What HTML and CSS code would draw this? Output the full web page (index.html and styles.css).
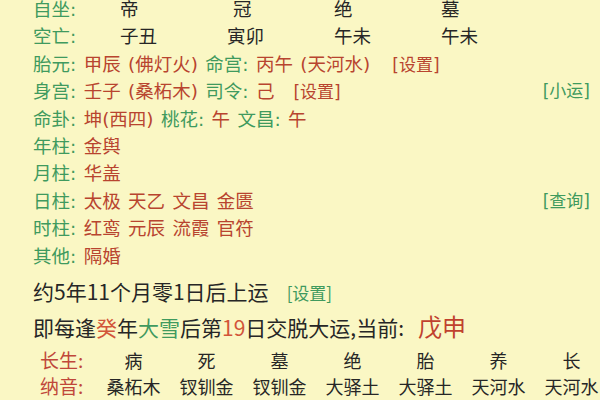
FILE: index.html
```html
<!DOCTYPE html>
<html lang="zh-CN">
<head>
<meta charset="utf-8">
<title>排盘</title>
<link rel="stylesheet" href="styles.css">
</head>
<body>
<div class="page">
  <div class="row cols">
    <span class="g">自坐:</span><span>帝</span><span class="shift">冠</span><span>绝</span><span>墓</span>
  </div>
  <div class="row cols">
    <span class="g">空亡:</span><span>子丑</span><span>寅卯</span><span>午未</span><span>午未</span>
  </div>
  <div class="row">
    <span class="g">胎元:</span> <span class="r">甲辰 (佛灯火)</span> <span class="g">命宫:</span> <span class="r">丙午 (天河水)</span><span class="link r gap">[设置]</span>
  </div>
  <div class="row split">
    <div><span class="g">身宫:</span> <span class="r">壬子 (桑柘木)</span> <span class="g">司令:</span> <span class="r">己</span><span class="link r gap2">[设置]</span></div>
    <span class="link g">[小运]</span>
  </div>
  <div class="row">
    <span class="g">命卦:</span> <span class="r">坤(西四)</span> <span class="g">桃花:</span> <span class="r">午</span> <span class="g">文昌:</span> <span class="r">午</span>
  </div>
  <div class="row"><span class="g">年柱:</span> <span class="r">金舆</span></div>
  <div class="row"><span class="g">月柱:</span> <span class="r">华盖</span></div>
  <div class="row split">
    <div><span class="g">日柱:</span> <span class="r">太极 天乙 文昌 金匮</span></div>
    <span class="link g">[查询]</span>
  </div>
  <div class="row"><span class="g">时柱:</span> <span class="r">红鸾 元辰 流霞 官符</span></div>
  <div class="row"><span class="g">其他:</span> <span class="r">隔婚</span></div>

  <div class="big first">约5年11个月零1日后上运<span class="link g set">[设置]</span></div>
  <div class="big">即每逢<span class="o">癸</span>年<span class="g2">大雪</span>后第<span class="o">19</span>日交脱大运,当前:<span class="cur">戊申</span></div>

  <div class="table">
    <div class="trow">
      <span class="tl">长生:</span><span>病</span><span>死</span><span>墓</span><span>绝</span><span>胎</span><span>养</span><span>长</span>
    </div>
    <div class="trow">
      <span class="tl">纳音:</span><span>桑柘木</span><span>钗钏金</span><span>钗钏金</span><span>大驿土</span><span>大驿土</span><span>天河水</span><span>天河水</span>
    </div>
  </div>
</div>
</body>
</html>
```

FILE: styles.css
```css
html, body {
  margin: 0;
  padding: 0;
  background: #faf7c4;
  overflow: hidden;
}
body {
  width: 600px;
  height: 400px;
  font-family: "Noto Sans CJK SC", "Noto Sans", sans-serif;
  color: #262626;
}
.page {
  padding-left: 33px;
  padding-right: 10px;
  margin-top: -4px;
}
.row {
  font-family: "DejaVu Sans", "Noto Sans CJK SC", sans-serif;
  font-size: 18.5px;
  line-height: 27.4px;
  height: 27.4px;
  word-spacing: 1.5px;
  white-space: nowrap;
}
.cols {
  display: grid;
  grid-template-columns: 87px 107px 107px 107px auto;
  word-spacing: 0;
}
.shift {
  padding-left: 6px;
}
.split {
  display: flex;
  justify-content: space-between;
}
.g { color: #3f9a5e; }
.r { color: #b8442f; }
.link { font-size: 17px; }
.gap { margin-left: 22px; }
.gap2 { margin-left: 19px; }

.big {
  font-size: 21px;
  line-height: 33px;
  white-space: nowrap;
}
.first { margin-top: 5px; }
.set { margin-left: 18px; }
.o { color: #d2553a; }
.g2 { color: #3f9a5e; }
.cur {
  color: #c0412e;
  font-size: 24px;
  margin-left: 14px;
}
.table {
  margin-top: 3px;
  padding-left: 7px;
}
.trow {
  display: grid;
  grid-template-columns: 57px repeat(7, 73px);
  font-size: 18px;
  line-height: 26px;
  white-space: nowrap;
}
.trow span { text-align: center; }
.trow .tl {
  text-align: left;
  color: #c0473a;
  font-size: 19px;
}
```
